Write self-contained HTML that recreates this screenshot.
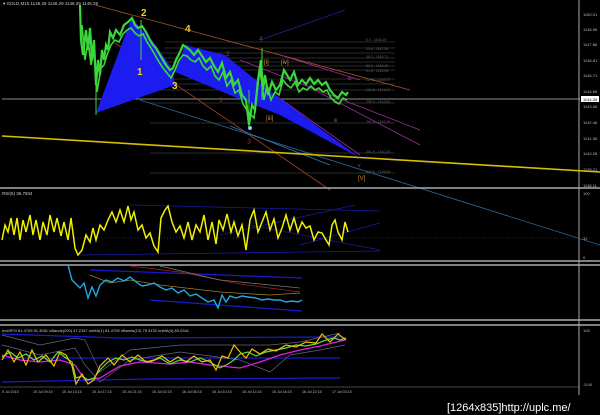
<!DOCTYPE html>
<html><head><style>
html,body{margin:0;padding:0;background:#000;width:600px;height:415px;overflow:hidden}
svg{display:block}
text{font-family:"Liberation Sans",sans-serif}
</style></head><body>
<svg width="600" height="415" viewBox="0 0 600 415" xmlns="http://www.w3.org/2000/svg">
<rect width="600" height="415" fill="#000"/>
<line x1="579" y1="0" x2="579" y2="395" stroke="#aaa" stroke-width="1"/>
<g font-size="4" fill="#bbb">
<text x="583" y="16">1150.01</text><text x="583" y="31">1148.96</text><text x="583" y="46">1147.86</text>
<text x="583" y="62">1146.81</text><text x="583" y="77">1145.71</text><text x="583" y="93">1144.66</text>
<text x="583" y="108">1143.56</text><text x="583" y="124">1142.46</text><text x="583" y="140">1141.36</text>
<text x="583" y="155">1140.26</text><text x="583" y="171">1139.21</text><text x="583" y="187">1138.11</text>
</g>
<rect x="581" y="96" width="18" height="6" fill="#fff"/><text x="583" y="101" font-size="4" fill="#000">1144.35</text>
<text x="3" y="5" font-size="4.5" fill="#ccc">▾ GOLD,M15  1146.29 1146.29 1146.29 1146.29</text>
<g stroke="#555" stroke-width="0.6">
<line x1="165" y1="42" x2="395" y2="42"/><line x1="165" y1="48" x2="395" y2="48"/><line x1="150" y1="53" x2="395" y2="53"/>
<line x1="150" y1="58" x2="395" y2="58"/><line x1="150" y1="62" x2="395" y2="62"/><line x1="150" y1="66" x2="395" y2="66"/>
<line x1="150" y1="70" x2="395" y2="70"/><line x1="150" y1="79" x2="395" y2="79"/><line x1="150" y1="84" x2="395" y2="84"/>
<line x1="150" y1="90" x2="395" y2="90"/><line x1="150" y1="103" x2="395" y2="103"/><line x1="150" y1="123" x2="395" y2="123"/>
<line x1="150" y1="153" x2="395" y2="153"/><line x1="150" y1="173" x2="395" y2="173"/>
</g>
<line x1="2" y1="99" x2="580" y2="99" stroke="#bbb" stroke-width="0.7"/>
<g font-size="3.5" fill="#666">
<text x="366" y="41">0.0 - 1146.29</text><text x="366" y="50">23.6 - 1147.55</text><text x="366" y="58">38.2 - 1145.71</text>
<text x="366" y="67">50.0 - 1146.40</text><text x="366" y="72">61.8 - 1146.04</text><text x="366" y="81">127.2 - 1145.37</text>
<text x="366" y="91">161.8 - 1144.61</text><text x="366" y="103">200.0 - 1143.81</text><text x="366" y="123">261.8 - 1142.45</text>
<text x="366" y="153">361.8 - 1140.30</text><text x="366" y="173">423.6 - 1139.03</text>
</g>
<g fill="none" stroke-width="0.8">
<line x1="95" y1="5" x2="410" y2="90" stroke="#a8502a"/>
<line x1="115" y1="43" x2="330" y2="190" stroke="#a8402a"/>
<line x1="140" y1="100" x2="600" y2="245" stroke="#2a6aa0"/>
<line x1="260" y1="40" x2="345" y2="10" stroke="#22229a"/>
<line x1="240" y1="60" x2="420" y2="130" stroke="#a02aa0"/>
<line x1="280" y1="55" x2="360" y2="80" stroke="#a02aa0"/>
<line x1="275" y1="95" x2="360" y2="155" stroke="#a02aa0"/>
<line x1="305" y1="85" x2="420" y2="145" stroke="#a02aa0"/>
<line x1="230" y1="126" x2="330" y2="165" stroke="#3a7ab0"/>
</g>
<line x1="2" y1="136" x2="600" y2="172" stroke="#d8c000" stroke-width="1.6"/>
<polygon points="96,113 132,17 140,28 152,40 173,70 175,85" fill="#1c1cf0"/>
<polygon points="175,72 185,45 225,55 262,85 360,158 280,115 230,95" fill="#1c1cf0"/>
<g fill="none" stroke="#3ad83a">
<polyline stroke-width="2.2" points="80,5 81,40 83,55 86,30 88,50 90,28 92,60 94,40 96,85 98,60 100,75 102,50 104,60 106,45 108,50 110,32 113,38 116,30 120,35 124,25 128,22 132,18 135,25 138,28 142,26 146,32 150,40 153,45 156,48 160,55 163,60 166,65 170,70 173,68 176,60 180,52 183,45 186,47 190,50 194,55 198,50 202,56 206,62 210,58 214,66 218,72 222,63 226,78 230,72 234,85 238,80 242,95 246,100 249,125 252,105 255,110 258,80 261,60 263,90 265,75 268,95 272,82 276,90 280,85 284,70 287,75 290,80 294,72 298,85 302,80 306,84 310,78 314,84 318,80 322,85 326,82 330,90 334,95 338,98 342,92 346,95 348,92"/>
<polyline stroke-width="1.6" points="82,25 85,60 88,40 91,65 94,50 97,92 101,68 104,65 107,55 111,45 115,40 119,42 123,34 127,30 131,28 135,33 139,36 143,34 147,42 151,48 155,55 159,62 163,68 167,73 171,78 175,70 179,60 183,55 187,56 191,60 195,62 199,58 203,66 207,70 211,66 215,76 219,80 223,72 227,86 231,80 235,93 239,90 243,104 247,110 251,115 254,118 257,92 260,70 264,100 267,85 271,100 275,92 279,95 283,80 287,85 291,88 295,82 299,92 303,88 307,90 311,86 315,90 319,88 323,92 327,90 331,98 335,102 339,104 343,98 347,100"/>
</g>
<g stroke="#3ad83a" stroke-width="1">
<line x1="96" y1="70" x2="96" y2="115"/><line x1="141" y1="20" x2="141" y2="60"/><line x1="249" y1="90" x2="249" y2="127"/><line x1="262" y1="48" x2="262" y2="100"/>
</g>
<g font-size="10" font-weight="bold" fill="#e8d020">
<text x="141" y="16">2</text><text x="185" y="32">4</text><text x="137" y="75">1</text><text x="172" y="89">3</text>
</g>
<g font-size="7" fill="#b02020">
<text x="259" y="41">4</text><text x="226" y="56">2</text><text x="247" y="144">3</text><text x="219" y="102">1</text>
</g>
<g font-size="6" fill="#c89030">
<text x="264" y="64">[i]</text><text x="281" y="64">[iv]</text><text x="266" y="120">[iii]</text><text x="358" y="180">[V]</text>
</g>
<g font-size="5" fill="#b040b0"><text x="334" y="122">iii</text><text x="348" y="80">iv</text><text x="358" y="167">v</text></g>
<circle cx="250" cy="128" r="2" fill="#8cf"/>
<g stroke="#aaa" stroke-width="1.5">
<line x1="0" y1="188" x2="600" y2="188"/><line x1="0" y1="261" x2="600" y2="261"/><line x1="0" y1="265" x2="600" y2="265"/>
<line x1="0" y1="320" x2="600" y2="320"/><line x1="0" y1="325" x2="600" y2="325"/>
</g>
<text x="2" y="195" font-size="4.5" fill="#ccc">RSI(5) 36.7934</text>
<g font-size="4" fill="#bbb"><text x="583" y="195">100</text><text x="583" y="240">32</text><text x="583" y="259">0</text></g>
<line x1="2" y1="238" x2="580" y2="238" stroke="#555" stroke-dasharray="1,2" stroke-width="0.6"/>
<g stroke="#1a1aa8" fill="none" stroke-width="0.8">
<line x1="130" y1="205" x2="380" y2="211"/><line x1="80" y1="255" x2="380" y2="251"/><line x1="220" y1="235" x2="355" y2="205"/><line x1="250" y1="225" x2="380" y2="250"/><line x1="300" y1="245" x2="380" y2="223"/>
</g>
<polyline fill="none" stroke="#f0f000" stroke-width="1.5" points="2,240 5,225 8,232 11,218 14,235 17,218 20,240 23,220 26,232 30,215 33,235 36,220 40,240 43,222 47,235 50,215 54,232 57,218 61,236 64,222 68,240 71,218 75,248 78,255 82,250 86,235 90,242 93,228 96,240 100,225 104,230 108,220 112,212 116,222 120,210 124,222 128,206 131,220 134,212 138,230 142,225 146,238 150,233 154,246 158,252 161,218 165,210 168,206 172,222 176,232 180,226 184,238 188,222 192,240 196,225 200,232 204,215 208,240 212,222 216,244 219,220 223,230 227,214 231,232 234,222 238,236 242,225 246,250 250,220 254,210 258,232 262,222 266,212 270,230 274,219 278,238 282,228 286,215 290,230 294,218 298,232 302,222 306,228 310,226 314,240 318,232 322,233 326,240 329,245 332,225 335,220 338,232 342,240 345,222 348,232"/>
<g fill="none" stroke-width="0.8">
<line x1="90" y1="270" x2="302" y2="278" stroke="#1a1ad0" stroke-width="1.2"/>
<line x1="150" y1="300" x2="302" y2="311" stroke="#1a1ad0" stroke-width="1.2"/>
<polyline stroke="#a02020" points="130,266 180,272 240,284 300,292"/>
<polyline stroke="#777" points="160,266 220,280 300,288"/>
<polyline stroke="#a08020" points="90,275 110,283 130,280 160,285 220,292 270,295 300,293"/>
</g>
<polyline fill="none" stroke="#20a8e8" stroke-width="1.4" points="68,265 72,280 76,284 80,288 84,283 88,298 92,287 96,296 100,285 106,280 112,282 118,278 124,281 130,277 136,282 142,286 148,285 154,283 160,287 166,290 172,288 178,293 184,290 190,296 196,294 202,298 208,302 214,300 218,308 222,295 226,302 230,296 236,298 242,296 248,297 256,298 262,300 268,299 274,300 280,300 286,302 292,301 298,302 302,300"/>
<text x="2" y="332" font-size="4" fill="#ccc">IncMFSI 81.4709 91.3051  nBands(200) 47.2157  nnMA(1) 81.4709  nBands(13) 79.3132  nnMA(4) 83.0341</text>
<g font-size="4" fill="#bbb"><text x="583" y="332">105</text><text x="583" y="386">-5.00</text></g>
<g fill="none" stroke="#1a1ad0" stroke-width="1.2">
<polyline points="2,334 120,338 340,337"/><line x1="2" y1="358" x2="340" y2="358"/><polyline points="2,382 150,379 340,378"/>
</g>
<polyline fill="none" stroke="#668" stroke-width="0.7" points="2,345 40,355 75,348 85,365 100,382 130,360 180,352 240,360 270,372 290,355 320,350 345,345"/>
<polyline fill="none" stroke="#668" stroke-width="0.7" points="2,335 40,345 75,338 85,340 100,372 130,350 180,345 240,345 270,345 300,342 340,333"/>
<polyline fill="none" stroke="#e020e0" stroke-width="1.3" points="2,355 20,360 40,362 60,360 75,365 85,380 100,378 120,366 140,362 170,364 190,362 210,365 240,368 260,362 280,355 300,350 320,346 345,340"/>
<polyline fill="none" stroke="#60e040" stroke-width="1.2" points="2,357 10,352 18,358 26,354 34,360 42,356 50,362 58,352 66,358 72,362 76,378 82,376 88,380 94,378 100,370 108,362 116,358 124,360 132,357 140,360 150,362 160,358 170,364 180,360 190,362 200,358 210,362 220,368 228,364 234,360 240,354 248,352 256,356 266,352 276,350 286,348 296,345 306,346 316,344 326,340 334,338 340,340 346,338"/>
<polyline fill="none" stroke="#f0c000" stroke-width="1.2" points="2,360 8,350 14,362 20,352 26,365 32,350 38,362 46,355 54,366 60,352 66,355 72,366 76,384 82,374 88,384 94,380 100,366 108,358 114,365 122,355 130,362 138,355 146,362 154,360 162,356 170,362 178,357 186,362 194,356 202,362 210,360 216,370 222,356 228,358 234,345 240,352 246,358 252,349 260,354 268,349 276,351 286,345 296,347 306,342 316,343 322,334 330,342 338,334 346,340"/>
<g font-size="3.6" fill="#bbb">
<text x="2" y="393">5 Jul 2015</text><text x="33" y="393">15 Jul 09:15</text><text x="62" y="393">15 Jul 13:15</text><text x="92" y="393">15 Jul 17:15</text>
<text x="122" y="393">15 Jul 21:15</text><text x="152" y="393">16 Jul 02:15</text><text x="182" y="393">16 Jul 06:15</text><text x="212" y="393">16 Jul 10:15</text>
<text x="242" y="393">16 Jul 14:15</text><text x="272" y="393">16 Jul 18:15</text><text x="302" y="393">16 Jul 22:15</text><text x="332" y="393">17 Jul 03:15</text>
</g>
<line x1="0" y1="387" x2="580" y2="387" stroke="#888" stroke-width="0.6"/>
<text x="447" y="411" font-size="11" fill="#fff" font-family="Liberation Mono, monospace">[1264x835]http://uplc.me/</text>
</svg>
</body></html>
